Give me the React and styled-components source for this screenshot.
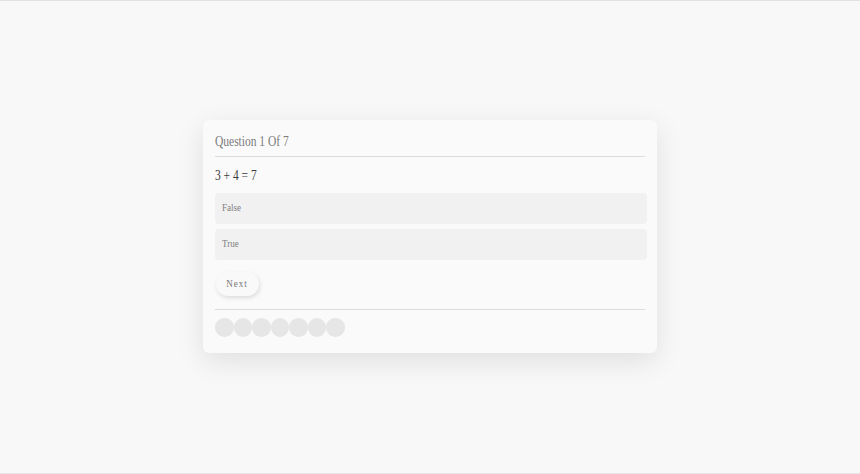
import React from 'react'
import styled, { createGlobalStyle } from 'styled-components'

const Global = createGlobalStyle`
html, body {
  margin: 0;
  padding: 0;
  background: #f8f8f8;
  font-family: 'Liberation Serif', 'Times New Roman', serif;
}
`

const Page = styled.div`
width: 100vw;
height: 100vh;
box-sizing: border-box;
border-top: 1px solid #e2e2e2;
border-bottom: 1px solid #e6e6e6;
display: flex;
justify-content: center;
padding-top: 119px;
`

const Card = styled.div`
width: 454px;
height: 233px;
box-sizing: border-box;
background: #fafafa;
border-radius: 6px;
box-shadow: 0 8px 28px rgba(0, 0, 0, 0.1);
padding: 12px 10px 0 12px;
display: flex;
flex-direction: column;
`

// the text in the shot is narrow, so squeeze it sideways
const Narrow = styled.span`
display: inline-block;
transform: scaleX(0.82);
transform-origin: ${props => props.$center ? 'center' : 'left'} center;
white-space: nowrap;
`

const Title = styled.h2`
margin: 0;
font-weight: 400;
font-size: 14px;
color: #7a7a7a;
padding: 1px 0 5px;
border-bottom: 1.5px solid #dcdcdc;
margin-right: 2px;
line-height: 18px;
`

const Question = styled.p`
margin: 10px 0 0;
font-size: 14px;
color: #3a3a3a;
line-height: 18px;
`

const Options = styled.div`
margin-top: 8px;
display: flex;
flex-direction: column;
gap: 5px;
`

const Option = styled.button`
height: 31px;
border: none;
border-radius: 4px;
background: #f1f1f1;
text-align: left;
padding: 0 7px 3px;
font-family: inherit;
font-size: 11px;
color: #808080;
cursor: pointer;
`

const NextButton = styled.button`
align-self: flex-start;
margin: 12px 0 0 1px;
width: 43px;
height: 24px;
padding: 0 0 2px;
border: none;
border-radius: 12px;
background: #f9f9f9;
box-shadow: 1px 2px 4px rgba(0, 0, 0, 0.12);
font-family: inherit;
font-size: 11px;
letter-spacing: 1.2px;
color: #777;
cursor: pointer;
`

const Divider = styled.hr`
margin: 13px 2px 0 0;
border: none;
border-top: 1px solid #dcdcdc;
`

const Dots = styled.div`
margin-top: 8px;
display: flex;
`

const Dot = styled.span`
width: 18.5px;
height: 18.5px;
border-radius: 50%;
background: #e6e6e6;
`

export default function App() {
  return (
    <>
      <Global />
      <Page>
        <Card>
          <Title><Narrow>Question 1 Of 7</Narrow></Title>
          <Question><Narrow>3 + 4 = 7</Narrow></Question>
          <Options>
            <Option><Narrow>False</Narrow></Option>
            <Option><Narrow>True</Narrow></Option>
          </Options>
          <NextButton><Narrow $center>Next</Narrow></NextButton>
          <Divider />
          <Dots>
            {Array.from({ length: 7 }).map((_, i) => (
              <Dot key={i} />
            ))}
          </Dots>
        </Card>
      </Page>
    </>
  )
}
